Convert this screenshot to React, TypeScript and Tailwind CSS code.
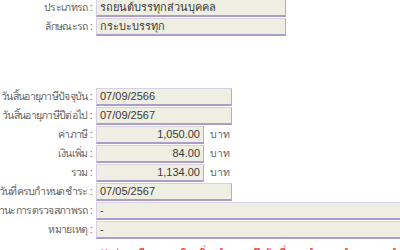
const rows1 = [
  { label: 'ประเภทรถ :', value: 'รถยนต์บรรทุกส่วนบุคคล' },
  { label: 'ลักษณะรถ :', value: 'กระบะบรรทุก' },
];

type Row = { label: string; value: string; kind: 'date' | 'money' | 'wide' };

const rows2: Row[] = [
  { label: 'วันสิ้นอายุภาษีปัจจุบัน :', value: '07/09/2566', kind: 'date' },
  { label: 'วันสิ้นอายุภาษีปีต่อไป :', value: '07/09/2567', kind: 'date' },
  { label: 'ค่าภาษี :', value: '1,050.00', kind: 'money' },
  { label: 'เงินเพิ่ม :', value: '84.00', kind: 'money' },
  { label: 'รวม :', value: '1,134.00', kind: 'money' },
  { label: 'วันที่ครบกำหนดชำระ :', value: '07/05/2567', kind: 'date' },
  { label: 'สถานะการตรวจสภาพรถ :', value: '-', kind: 'wide' },
  { label: 'หมายเหตุ :', value: '-', kind: 'wide' },
];

const boxBase =
  'h-[18px] shrink-0 bg-[#efeee2] border border-[#d6d0e4] border-b-2 border-b-[#aa9ccb] border-r-[#b6aacf] px-[3px] text-[11px] leading-[15px] text-[#3a3a3a]';

const Label = ({ text }: { text: string }) => (
  <div className="w-[96px] shrink-0 flex justify-end overflow-hidden pr-[4px]">
    <span className="whitespace-nowrap text-[10.5px] tracking-[-0.7px] text-[#666]">{text}</span>
  </div>
);

export default function App() {
  return (
    <div
      className="w-[400px] h-[250px] overflow-hidden bg-white"
      style={{ fontFamily: 'Tahoma, "Liberation Sans", "Noto Sans", sans-serif' }}
    >
      <div className="-mt-[1px] flex flex-col gap-[1px]">
        {rows1.map((r) => (
          <div key={r.label} className="flex items-center h-[18px]">
            <Label text={r.label} />
            <div className={`${boxBase} w-[190px]`}>{r.value}</div>
          </div>
        ))}
      </div>
      <div className="mt-[52px] flex flex-col gap-[1px]">
        {rows2.map((r) => (
          <div key={r.label} className="flex items-center h-[18px]">
            <Label text={r.label} />
            {r.kind === 'date' && (
              <div className={`${boxBase} w-[136px]`}>{r.value}</div>
            )}
            {r.kind === 'money' && (
              <>
                <div className={`${boxBase} w-[108px] text-right`}>{r.value}</div>
                <span className="ml-[6px] text-[10.5px] text-[#666]">บาท</span>
              </>
            )}
            {r.kind === 'wide' && (
              <div className={`${boxBase} w-[320px]`}>{r.value}</div>
            )}
          </div>
        ))}
      </div>
      <div className="mt-[6px] ml-[100px] whitespace-nowrap text-[11px] text-[#d22]">
        ** ค่าภาษีรถและเงินเพิ่ม คำนวณถึงวันที่ครบกำหนดชำระ หากชำระหลังวันดังกล่าวจะมีเงินเพิ่ม
      </div>
    </div>
  );
}
